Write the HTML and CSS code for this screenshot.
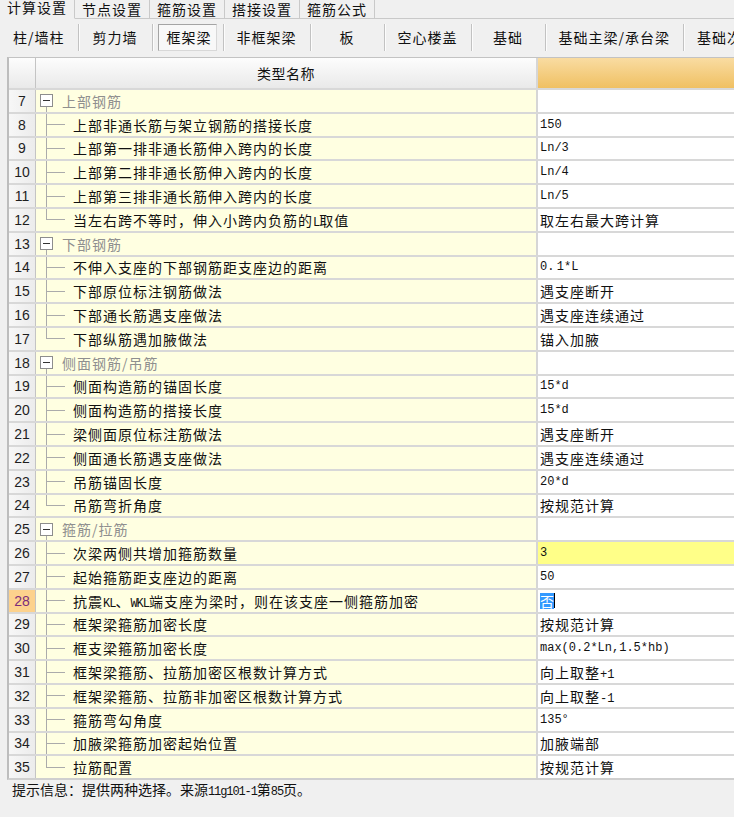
FILE: index.html
```html
<!DOCTYPE html>
<html lang="zh-CN">
<head>
<meta charset="utf-8">
<title>计算设置</title>
<link rel="stylesheet" href="styles.css">
</head>
<body>
<div class="tabs">
  <div class="tab active">计算设置</div>
  <div class="tab">节点设置</div>
  <div class="tab">箍筋设置</div>
  <div class="tab">搭接设置</div>
  <div class="tab">箍筋公式</div>
  <div class="tabs-fill"></div>
</div>
<div class="subtabs">
  <div class="st">柱/墙柱</div>
  <div class="st">剪力墙</div>
  <div class="st sel"><span class="selbox">框架梁</span></div>
  <div class="st">非框架梁</div>
  <div class="st">板</div>
  <div class="st">空心楼盖</div>
  <div class="st">基础</div>
  <div class="st">基础主梁/承台梁</div>
  <div class="st">基础次梁</div>
</div>
<div class="sheet">
  <div class="hrow"><div class="hnum"></div><div class="hname">类型名称</div><div class="hval"></div></div>

  <div class="row group"><div class="num">7</div><div class="name"><span class="gtree"><span class="box"></span></span><span class="lbl gtext">上部钢筋</span></div><div class="val"></div></div>
  <div class="row"><div class="num">8</div><div class="name"><span class="tree"></span><span class="lbl">上部非通长筋与架立钢筋的搭接长度</span></div><div class="val"><span class="m">150</span></div></div>
  <div class="row"><div class="num">9</div><div class="name"><span class="tree"></span><span class="lbl">上部第一排非通长筋伸入跨内的长度</span></div><div class="val"><span class="m">Ln/3</span></div></div>
  <div class="row"><div class="num">10</div><div class="name"><span class="tree"></span><span class="lbl">上部第二排非通长筋伸入跨内的长度</span></div><div class="val"><span class="m">Ln/4</span></div></div>
  <div class="row"><div class="num">11</div><div class="name"><span class="tree"></span><span class="lbl">上部第三排非通长筋伸入跨内的长度</span></div><div class="val"><span class="m">Ln/5</span></div></div>
  <div class="row last"><div class="num">12</div><div class="name"><span class="tree"></span><span class="lbl">当左右跨不等时，伸入小跨内负筋的<span class="nl">L</span>取值</span></div><div class="val">取左右最大跨计算</div></div>

  <div class="row group"><div class="num">13</div><div class="name"><span class="gtree"><span class="box"></span></span><span class="lbl gtext">下部钢筋</span></div><div class="val"></div></div>
  <div class="row"><div class="num">14</div><div class="name"><span class="tree"></span><span class="lbl">不伸入支座的下部钢筋距支座边的距离</span></div><div class="val"><span class="m">0.&#8201;1*L</span></div></div>
  <div class="row"><div class="num">15</div><div class="name"><span class="tree"></span><span class="lbl">下部原位标注钢筋做法</span></div><div class="val">遇支座断开</div></div>
  <div class="row"><div class="num">16</div><div class="name"><span class="tree"></span><span class="lbl">下部通长筋遇支座做法</span></div><div class="val">遇支座连续通过</div></div>
  <div class="row last"><div class="num">17</div><div class="name"><span class="tree"></span><span class="lbl">下部纵筋遇加腋做法</span></div><div class="val">锚入加腋</div></div>

  <div class="row group"><div class="num">18</div><div class="name"><span class="gtree"><span class="box"></span></span><span class="lbl gtext">侧面钢筋/吊筋</span></div><div class="val"></div></div>
  <div class="row"><div class="num">19</div><div class="name"><span class="tree"></span><span class="lbl">侧面构造筋的锚固长度</span></div><div class="val"><span class="m">15*d</span></div></div>
  <div class="row"><div class="num">20</div><div class="name"><span class="tree"></span><span class="lbl">侧面构造筋的搭接长度</span></div><div class="val"><span class="m">15*d</span></div></div>
  <div class="row"><div class="num">21</div><div class="name"><span class="tree"></span><span class="lbl">梁侧面原位标注筋做法</span></div><div class="val">遇支座断开</div></div>
  <div class="row"><div class="num">22</div><div class="name"><span class="tree"></span><span class="lbl">侧面通长筋遇支座做法</span></div><div class="val">遇支座连续通过</div></div>
  <div class="row"><div class="num">23</div><div class="name"><span class="tree"></span><span class="lbl">吊筋锚固长度</span></div><div class="val"><span class="m">20*d</span></div></div>
  <div class="row last"><div class="num">24</div><div class="name"><span class="tree"></span><span class="lbl">吊筋弯折角度</span></div><div class="val">按规范计算</div></div>

  <div class="row group"><div class="num">25</div><div class="name"><span class="gtree"><span class="box"></span></span><span class="lbl gtext">箍筋/拉筋</span></div><div class="val"></div></div>
  <div class="row"><div class="num">26</div><div class="name"><span class="tree"></span><span class="lbl">次梁两侧共增加箍筋数量</span></div><div class="val yel"><span class="m">3</span></div></div>
  <div class="row"><div class="num">27</div><div class="name"><span class="tree"></span><span class="lbl">起始箍筋距支座边的距离</span></div><div class="val"><span class="m">50</span></div></div>
  <div class="row cur"><div class="num">28</div><div class="name"><span class="tree"></span><span class="lbl">抗震<span class="nl">KL</span>、<span class="nl">WKL</span>端支座为梁时，则在该支座一侧箍筋加密</span></div><div class="val"><span class="hl">否</span><span class="caret"></span></div></div>
  <div class="row"><div class="num">29</div><div class="name"><span class="tree"></span><span class="lbl">框架梁箍筋加密长度</span></div><div class="val">按规范计算</div></div>
  <div class="row"><div class="num">30</div><div class="name"><span class="tree"></span><span class="lbl">框支梁箍筋加密长度</span></div><div class="val"><span class="m">max(0.2*Ln,1.5*hb)</span></div></div>
  <div class="row"><div class="num">31</div><div class="name"><span class="tree"></span><span class="lbl">框架梁箍筋、拉筋加密区根数计算方式</span></div><div class="val"><span class="lbl">向上取整<span class="m">+1</span></span></div></div>
  <div class="row"><div class="num">32</div><div class="name"><span class="tree"></span><span class="lbl">框架梁箍筋、拉筋非加密区根数计算方式</span></div><div class="val"><span class="lbl">向上取整<span class="m">-1</span></span></div></div>
  <div class="row"><div class="num">33</div><div class="name"><span class="tree"></span><span class="lbl">箍筋弯勾角度</span></div><div class="val"><span class="m">135°</span></div></div>
  <div class="row"><div class="num">34</div><div class="name"><span class="tree"></span><span class="lbl">加腋梁箍筋加密起始位置</span></div><div class="val">加腋端部</div></div>
  <div class="row last"><div class="num">35</div><div class="name"><span class="tree"></span><span class="lbl">拉筋配置</span></div><div class="val">按规范计算</div></div>
</div>
<div class="status">提示信息：提供两种选择。来源<span class="sl">11g101-1</span>第<span class="sl">85</span>页。</div>
</body>
</html>
```
FILE: styles.css
```css
* { box-sizing: border-box; }

body {
  margin: 0;
  width: 734px;
  height: 817px;
  overflow: hidden;
  background: #f0f0f0;
  font-family: "Noto Sans CJK SC", sans-serif;
  font-size: 14px;
  color: #000;
}

/* top tabs */
.tabs {
  display: flex;
  height: 19px;
  white-space: nowrap;
}
.tab {
  flex: none;
  padding: 0 7px;
  line-height: 18px;
  letter-spacing: 1px;
  border-right: 1px solid #c9c9c9;
  border-bottom: 1px solid #c9c9c9;
  color: #111;
}
.tab.active {
  line-height: 14px;
  border-bottom-color: transparent;
}
.tabs-fill {
  flex: 1;
  border-bottom: 1px solid #c9c9c9;
}

/* sub tabs */
.subtabs {
  display: flex;
  align-items: center;
  height: 37px;
  margin-bottom: 1px;
  white-space: nowrap;
  overflow: hidden;
}
.st {
  flex: none;
  min-width: 74px;
  height: 27px;
  padding: 0 13px;
  line-height: 27px;
  text-align: center;
  letter-spacing: 1px;
  border-right: 1px solid #c2c2c2;
  box-shadow: 1px 0 0 #fcfcfc;
  color: #111;
}
.st.sel {
  min-width: 0;
  padding: 0 6px 0 5px;
}
.selbox {
  display: inline-block;
  height: 27px;
  line-height: 25px;
  padding: 0 4px 0 8px;
  border: 1px solid #a4a4a4;
  border-right-color: #d8d8d8;
  border-bottom-color: #d8d8d8;
  background: #f8f8f8;
}

/* sheet */
.sheet {
  margin-left: 7px;
  width: 790px;
  background: #fff;
  border-left: 2px solid #bdbdbd;
  border-top: 1px solid #c3c3c3;
  border-bottom: 2px solid #cfcfcf;
}
.hrow, .row {
  display: grid;
  grid-template-columns: 27px 502px 1fr;
}
.hrow { height: 30px; }
.hnum, .hname {
  background: linear-gradient(#fdfdfd, #e9e9e9);
}
.hnum { border-right: 1px solid #c4c4c4; }
.hname {
  border-right: 2px solid #d6d6d6;
  display: flex;
  align-items: center;
  justify-content: center;
  letter-spacing: 0.5px;
  color: #111;
}
.hval {
  background: linear-gradient(#f9dca2, #f0c062);
}

.row {
  height: 23.8px;
  border-top: 2px solid #d8d8d8;
}
.num {
  display: flex;
  align-items: center;
  justify-content: center;
  background: linear-gradient(to right, #f7f7f7, #ececec);
  border-right: 1px solid #c4c4c4;
  font-family: "Liberation Sans", sans-serif;
  font-size: 14px;
  color: #1e1e1e;
}
.row.cur .num {
  background: #fdd28d;
  color: #7b2d7b;
}
.name {
  display: flex;
  align-items: center;
  background: #ffffe1;
  border-right: 2px solid #d6d6d6;
  letter-spacing: 1px;
  white-space: nowrap;
  overflow: hidden;
  color: #111;
}
.val {
  display: flex;
  align-items: center;
  padding-left: 2px;
  letter-spacing: 1px;
  white-space: nowrap;
  color: #111;
}
.val.yel { background: #ffff88; }

/* tree */
.tree {
  flex: none;
  width: 37px;
  align-self: stretch;
  background-image: linear-gradient(#ababab, #ababab), linear-gradient(#ababab, #ababab);
  background-repeat: no-repeat;
  background-position: 10px 0, 10px 50%;
  background-size: 1px 100%, 19px 1px;
}
.last .tree {
  background-size: 1px 50%, 19px 1px;
}
.gtree {
  flex: none;
  width: 26px;
  align-self: stretch;
  display: flex;
  align-items: center;
  padding-left: 4px;
  background: linear-gradient(#ababab, #ababab) 10px 100% / 1px 50% no-repeat;
}
.box {
  width: 13px;
  height: 13px;
  border: 1px solid #8d8d8d;
  background: #fff linear-gradient(#333, #333) center / 7px 1px no-repeat;
}
.gtext { color: #8f8f8f; }

.m {
  font-family: "Liberation Mono", monospace;
  font-size: 12px;
  letter-spacing: 0;
}
.nl {
  font-family: "Liberation Mono", monospace;
  font-size: 12px;
  letter-spacing: -1px;
}
.hl {
  background: #3399ff;
  color: #fff;
  letter-spacing: 0;
  line-height: 16px;
}
.caret {
  width: 1px;
  height: 15px;
  background: #000;
}

.status {
  height: 19px;
  line-height: 19px;
  padding-left: 12px;
  white-space: nowrap;
  color: #111;
}
.sl {
  font-family: "Liberation Mono", monospace;
  font-size: 12px;
  letter-spacing: -1.1px;
}
```
